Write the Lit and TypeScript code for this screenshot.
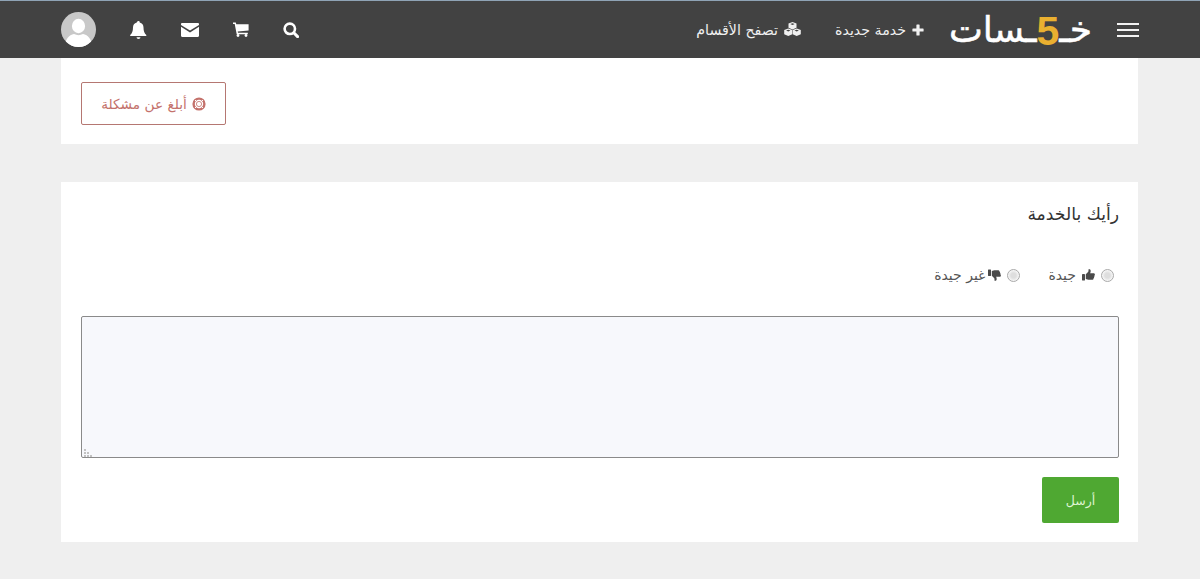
import { LitElement, html, css, svg } from "lit";
import { customElement } from "lit/decorators.js";

const icon = (w: number, h: number, vb: string, body: unknown, cls = "") =>
  html`<svg class="ic ${cls}" width=${w} height=${h} viewBox=${vb} fill="currentColor" aria-hidden="true">${body}</svg>`;

const plus = () => icon(12, 12, "0 0 12 12", svg`<path d="M4.4 1a.6.6 0 0 1 .6-.6h2a.6.6 0 0 1 .6.6v3.400H11a.6.6 0 0 1 .6.6v2a.6.6 0 0 1-.6.6H7.600V11a.6.6 0 0 1-.6.6H5a.6.6 0 0 1-.6-.6V7.600H1A.6.6 0 0 1 .4 7V5A.6.6 0 0 1 1 4.400h3.400z"/>`);
const cubes = () => icon(17, 15, "0 0 17 15", svg`
  <path d="M8.500 0l4 1.500v4.300l-4 1.700-4-1.700V1.500zM8.500 1.300L6.300 2.100l2.200.9 2.200-.9z" fill-rule="evenodd"/>
  <path d="M4.300 6.500l4 1.500v4.300l-4 1.700-4.100-1.700V8zM4.300 7.800l-2.200.8 2.200.9 2.200-.9z" fill-rule="evenodd"/>
  <path d="M12.700 6.500l4.100 1.500v4.300l-4.100 1.700-4-1.700V8zM12.700 7.800l-2.200.8 2.200.9 2.200-.9z" fill-rule="evenodd"/>`);
const search = () => icon(16, 16, "0 0 16 16", svg`<circle cx="6.800" cy="6.800" r="5.200" fill="none" stroke="currentColor" stroke-width="2.600"/><path d="M10.800 10.800l3.800 3.800" stroke="currentColor" stroke-width="3" stroke-linecap="round"/>`);
const cart = () => icon(16, 15, "0 0 16 15", svg`<path d="M0 .6h2.800l.5 1.600H15.600v6.200L4.700 9.600l.3 1.200h9.800v1.500H3.700L1.700 2.100H0z"/><circle cx="5" cy="13.500" r="1.400"/><circle cx="13" cy="13.500" r="1.400"/>`);
const envelope = () => icon(18, 14, "0 0 18 14", svg`<path d="M1.200 0h15.600C17.500 0 18 .5 18 1.200v.7L9 7.600 0 1.900v-.7C0 .5.500 0 1.200 0z"/><path d="M0 3.700l9 5.700 9-5.700v9.100c0 .7-.5 1.200-1.200 1.200H1.200C.5 14 0 13.500 0 12.800z"/>`);
const bell = () => icon(17, 18, "0 0 17 18", svg`<path d="M8.500 0c.7 0 1.200.5 1.200 1.200v.3c2.500.5 3.800 2.400 3.800 5 0 4 1 5.700 2.800 7.500v1H.2v-1C2 12.200 3 10.500 3 6.500c0-2.600 1.300-4.500 3.800-5v-.3C7.300.5 7.800 0 8.500 0z"/><path d="M6.500 16.200h4a2 1.700 0 0 1-4 0z"/>`);
const lifeRing = () => icon(14, 14, "0 0 14 14", svg`<circle cx="7" cy="7" r="5.400" fill="none" stroke="currentColor" stroke-width="2.400"/><circle cx="7" cy="7" r="2.600" fill="none" stroke="currentColor" stroke-width=".8"/><path d="M3 3l2 2M11 3L9 5M3 11l2-2M11 11L9 9" stroke="#fff" stroke-width="1"/>`);
const thumbBody = svg`<rect x="0" y="5" width="3" height="6.500" rx=".4"/><path d="M3.800 5.300L6.300 2.800 6.700 0c1.300 0 2 .9 2 2 0 .8-.3 1.500-.6 2.200h3.500c.8 0 1.300.6 1.300 1.300 0 .4-.2.800-.4 1 .1.600 0 1.100-.4 1.400.1.600-.1 1.100-.5 1.400 0 1-.7 1.500-1.500 1.500H7.300c-1.300 0-2.300-.6-3.500-.8z"/>`;
const thumbUp = () => icon(13, 12, "0 0 13 12", thumbBody);
const thumbDown = () => icon(13, 12, "0 0 13 12", svg`<g transform="matrix(1 0 0 -1 0 12)">${thumbBody}</g>`);

@customElement("app-root")
export class AppRoot extends LitElement {
  static styles = css`
    :host {
      display: block;
      min-height: 579px;
      background: #efefef;
      font-family: "DejaVu Sans", "Noto Sans", sans-serif;
      color: #333;
      overflow: hidden;
    }
    * { box-sizing: border-box; }
    .ic { display: block; flex: none; }
    .bar {
      height: 58px;
      background: #424242;
      border-top: 1px solid #8fa3b5;
      color: #fff;
      padding: 0 61px;
    }
    .bar-in {
      height: 100%;
      display: flex;
      align-items: center;
    }
    .burger {
      width: 22px;
      display: flex;
      flex-direction: column;
      gap: 4px;
      margin-inline-end: 27px;
    }
    .burger i { display: block; height: 2px; background: #f2f2f2; }
    .logo {
      width: 139px;
      height: 40px;
      margin-inline-end: 27px;
      display: flex;
      align-items: center;
      justify-content: center;
      font-size: 36px;
      line-height: 40px;
      color: #fff;
      white-space: nowrap;
      -webkit-text-stroke: 0.5px #fff;
    }
    .five {
      font: 700 41px/36px "Liberation Sans", sans-serif;
      color: #eab030;
      -webkit-text-stroke: 0;
      padding-top: 2px;
    }
    .link {
      display: flex;
      align-items: center;
      gap: 6px;
      font-size: 14.200px;
      color: #f0f0f0;
      white-space: nowrap;
    }
    .link.first { margin-inline-end: 34px; }
    .tools {
      display: flex;
      align-items: center;
      margin-inline-start: auto;
      gap: 34px;
    }
    .avatar {
      width: 35px;
      height: 35px;
      border-radius: 50%;
      background: #c8c8c8;
      overflow: hidden;
    }
    .page { padding: 0 62px 0 61px; }
    .card { background: #fff; }
    .report-card {
      height: 86px;
      padding: 24px 19px 0 20px;
      display: flex;
      justify-content: flex-end;
      margin-bottom: 38px;
    }
    .report {
      width: 145px;
      height: 43px;
      border: 1px solid #b57772;
      border-radius: 2px;
      background: #fff;
      color: #c4726c;
      font: 13.700px "DejaVu Sans", sans-serif;
      display: flex;
      align-items: center;
      justify-content: center;
      gap: 5px;
    }
    .form {
      height: 360px;
      padding: 18px 19px 0 20px;
    }
    h2 {
      margin: 0;
      font-size: 17.200px;
      font-weight: 400;
      line-height: 28px;
      color: #333;
    }
    .opts {
      display: flex;
      margin-top: 33px;
      padding-inline-start: 5px;
      height: 28px;
      align-items: center;
      gap: 28px;
    }
    label {
      display: flex;
      align-items: center;
      font-size: 14px;
      color: #555;
      gap: 6px;
    }
    input[type="radio"] {
      appearance: none;
      width: 13px;
      height: 13px;
      margin: 0;
      border-radius: 50%;
      border: 1px solid #aaaaaa;
      background: radial-gradient(circle at 50% 50%, #dedede 0 2.500px, #f4f4f4 5px);
    }
    .opt-ic { color: #4a4a4a; }
    .tight .opt-ic { margin-inline-end: -3px; }
    textarea {
      display: block;
      width: 100%;
      height: 142px;
      margin-top: 27px;
      border: 1px solid #8a8a8a;
      border-radius: 2px;
      background: #f7f8fc;
    }
    textarea::-webkit-resizer {
      --d: linear-gradient(#c2c2c2, #c2c2c2);
      background-image: var(--d), var(--d), var(--d), var(--d), var(--d), var(--d);
      background-repeat: no-repeat;
      background-size: 2px 2px;
      background-position: 2px 7px, 2px 10px, 5px 10px, 2px 13px, 5px 13px, 8px 13px;
    }
    .actions {
      display: flex;
      margin-top: 19px;
    }
    .send {
      width: 77px;
      height: 46px;
      border: 0;
      border-radius: 2px;
      background: #4fa832;
      color: #dff5d2;
      font: 12.500px "DejaVu Sans", sans-serif;
    }
  `;

  render() {
    return html`
      <div dir="rtl">
        <header class="bar">
          <div class="bar-in">
            <div class="burger"><i></i><i></i><i></i></div>
            <div class="logo"><span>خـ</span><span class="five">5</span><span>ـسات</span></div>
            <a class="link first">${plus()}خدمة جديدة</a>
            <a class="link">${cubes()}تصفح الأقسام</a>
            <div class="tools">
              ${search()} ${cart()} ${envelope()} ${bell()}
              <div class="avatar">
                <svg width="35" height="35" viewBox="0 0 35 35" fill="#fff" aria-hidden="true">
                  <ellipse cx="17.500" cy="14" rx="6.600" ry="7.200" />
                  <path d="M4 35c0-8 4-12 9-13 3 1.500 6 1.500 9 0 5 1 9 5 9 13z" />
                </svg>
              </div>
            </div>
          </div>
        </header>
        <main class="page">
          <section class="card report-card">
            <button class="report">${lifeRing()}أبلغ عن مشكلة</button>
          </section>
          <section class="card form">
            <h2>رأيك بالخدمة</h2>
            <div class="opts">
              <label><input type="radio" name="r" /><span class="opt-ic">${thumbUp()}</span>جيدة</label>
              <label class="tight"><input type="radio" name="r" /><span class="opt-ic">${thumbDown()}</span>غير جيدة</label>
            </div>
            <textarea></textarea>
            <div class="actions"><button class="send">أرسل</button></div>
          </section>
        </main>
      </div>
    `;
  }
}
